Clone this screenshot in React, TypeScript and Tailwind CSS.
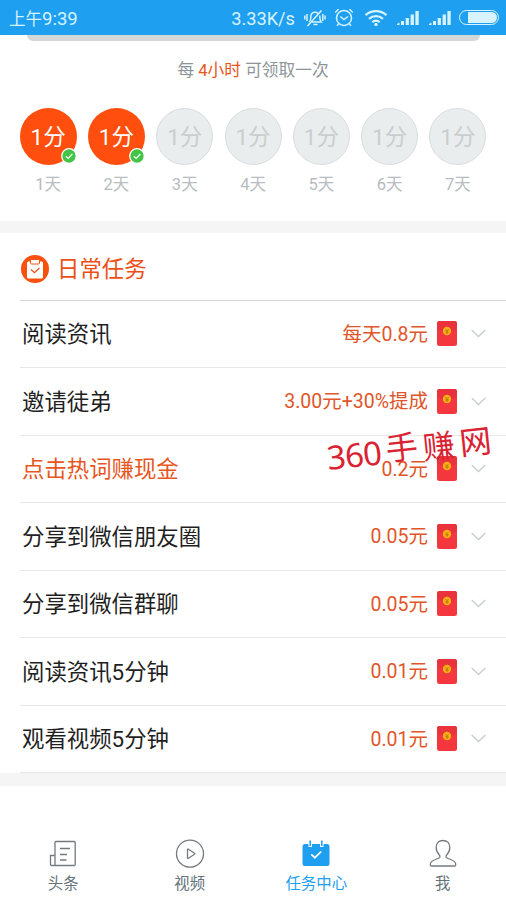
import { clsx } from 'clsx';

const days = [1, 2, 3, 4, 5, 6, 7];
const checkedDays = 2;

const tasks = [
  { title: '阅读资讯', reward: '每天0.8元' },
  { title: '邀请徒弟', reward: '3.00元+30%提成' },
  { title: '点击热词赚现金', reward: '0.2元', highlight: true },
  { title: '分享到微信朋友圈', reward: '0.05元' },
  { title: '分享到微信群聊', reward: '0.05元' },
  { title: '阅读资讯5分钟', reward: '0.01元' },
  { title: '观看视频5分钟', reward: '0.01元' },
];

const SignalIcon = () => (
  <svg width="22" height="16" viewBox="0 0 22 16" fill="currentColor">
    <path d="M0 15v-1l2.500-1.500V15Z" />
    <rect x="4" y="11" width="3" height="4" />
    <rect x="8.700" y="8" width="3.200" height="7" />
    <rect x="13.600" y="4.500" width="3.300" height="10.500" />
    <rect x="18.400" y="1" width="3.300" height="14" />
  </svg>
);

const StatusBar = () => (
  <header className="flex h-[35px] items-center bg-[#1e9ff0] pt-[2px] pl-[9px] leading-none text-[#d6f3ff]">
    <span className="pt-[2px] text-[16.5px]">
      上午<span className="text-[18.5px]">9:39</span>
    </span>
    <span className="ml-auto pt-[2px] text-[18.2px]">3.33K/s</span>
    <div className="flex w-[211px] shrink-0 items-center pb-[2px] pl-[9px]">
      {/* muted bell */}
      <svg width="22" height="18" viewBox="0 0 22 18" fill="none" stroke="currentColor" strokeWidth="1.5">
        <path d="M.8 6.500v4M3 5v7M21 6.500v4M18.800 5v7" />
        <path d="M5.500 13c1.300-1.300 1.300-2.300 1.300-5 0-3 1.600-4.800 4.200-4.800 1.200 0 2.200.4 3 1.200M15.800 6.500c0 4 .1 5 1.400 6.500H8M9.500 15.500h4" />
        <path d="M17.500 1.500 3.500 17" />
      </svg>
      {/* alarm clock */}
      <svg className="ml-[8px]" width="20" height="19" viewBox="0 0 20 19" fill="none" stroke="currentColor" strokeWidth="1.5">
        <circle cx="10" cy="10" r="7.500" />
        <path d="m6.200 8.500 3.800 3 4-3" />
        <path d="M1.200 4.500 4.500 1.300M18.800 4.500l-3.300-3.200M4.500 16l-1.500 1.700M15.500 16l1.500 1.700" />
      </svg>
      <svg className="ml-[10px]" width="24" height="18" viewBox="0 0 24 18" fill="none" stroke="currentColor" strokeWidth="2.3">
        <path d="M1.500 6.200c6-5.400 15-5.400 21 0" />
        <path d="M5 9.800c4.100-3.500 9.900-3.500 14 0" />
        <path d="M8.300 13.200c2.200-1.800 5.200-1.800 7.400 0" />
        <circle cx="12" cy="15.500" r="1.700" fill="currentColor" stroke="none" />
      </svg>
      <span className="ml-[9px]"><SignalIcon /></span>
      <span className="ml-[10px]"><SignalIcon /></span>
      <span className="ml-[8px] flex h-[15px] w-[40px] items-center justify-end rounded-full border-[1.5px] border-[#d6f3ff] pr-[1px]">
        <span className="h-[11px] w-[29px] rounded-l-xs rounded-r-full bg-[#d6f3ff]" />
      </span>
    </div>
  </header>
);

const DayBadge = ({ day }: { day: number }) => {
  const done = day <= checkedDays;

  return (
    <div className="flex w-[68.3px] flex-col items-center">
      <div
        className={clsx(
          'relative flex size-[57px] items-center justify-center rounded-full pt-[2px] text-[22.5px] leading-none',
          done ? 'bg-[#ff4e0e] text-white' : 'border border-[#d9dddd] bg-[#e9eded] text-[#c9cdcf]'
        )}
      >
        1分
        {done && (
          <svg className="absolute right-0 bottom-px" width="16" height="16" viewBox="0 0 16 16" fill="none">
            <circle cx="8" cy="8" r="7.300" fill="#43c447" stroke="white" strokeWidth="1.3" />
            <path d="m4.800 8.200 2.400 2.300 4.200-4.500" stroke="white" strokeWidth="1.2" />
          </svg>
        )}
      </div>
      <span className="mt-[12px] text-[16.5px] leading-4 text-[#b6bcc0]">{day}天</span>
    </div>
  );
};

const RedPacket = () => (
  <svg width="20" height="25" viewBox="0 0 20 25">
    <rect width="20" height="25" rx="2.500" fill="#f4373f" />
    <path d="M0 2.500A2.500 2.500 0 0 1 2.500 0h15A2.500 2.500 0 0 1 20 2.500V7C14 12 6 12 0 7Z" fill="#e9323b" />
    <circle cx="10" cy="10" r="4.200" fill="#fbb116" />
    <path d="m8.300 7.800 1.700 2 1.700-2M10 9.800v3M8.300 10.300h3.400M8.500 11.700h3" stroke="#b86b10" strokeWidth=".7" fill="none" />
  </svg>
);

const TaskRow = ({ title, reward, highlight }: { title: string; reward: string; highlight?: boolean }) => (
  <li className="flex h-[67.5px] items-center border-b border-[#e6e8e8] pr-[20px] pl-[2px]">
    <span className={clsx('pt-px text-[22.4px] leading-none', highlight ? 'text-[#e8561e]' : 'text-[#1f1f1f]')}>{title}</span>
    <span className="mr-[9px] ml-auto pt-px text-[19.5px] leading-none text-[#e0562a]">{reward}</span>
    <RedPacket />
    <svg className="ml-[14px]" width="15" height="9" viewBox="0 0 15 9" fill="none" stroke="#c9cccf" strokeWidth="1.3">
      <path d="m.7 1 6.800 6.500L14.300 1" />
    </svg>
  </li>
);

const TabBar = () => (
  <nav className="grid h-[114px] grid-cols-4 pt-[53px] text-[15.4px] leading-none text-[#66727a]">
    <a className="flex flex-col items-center gap-[8px]">
      <svg width="28" height="30" viewBox="0 0 28 30" fill="none" stroke="#737b80" strokeWidth="1.3">
        <path d="M6 26.500V3.500q0-1 1-1h18.200q1 0 1 1v22q0 1-1 1H2.500q-1 0-1-1V16.500H6" />
        <path d="M11 9.500h10M11 15.500h7M11 21h6.500" />
      </svg>
      头条
    </a>
    <a className="flex flex-col items-center gap-[8px]">
      <svg width="30" height="30" viewBox="0 0 30 30" fill="none" stroke="#737b80" strokeWidth="1.3">
        <circle cx="15" cy="14.700" r="13.500" />
        <path d="M12.500 10.700v8q0 1 1 .5l6-4q.8-.5 0-1l-6-4q-1-.5-1 .5Z" />
      </svg>
      视频
    </a>
    <a className="flex flex-col items-center gap-[8px] text-[#1e9ff0]">
      <svg width="28" height="30" viewBox="0 0 28 30" fill="none">
        <rect x=".5" y="5" width="27" height="22" rx="2.500" fill="#1e9ff0" />
        <path d="M8.200 2v6M19.800 2v6" stroke="white" strokeWidth="3.500" />
        <path d="M8.200 1.500V7M19.800 1.500V7" stroke="#1e9ff0" strokeWidth="1.500" />
        <path d="m9.300 15.300 3.600 3.400 6.300-6.200" stroke="white" strokeWidth="1.700" />
      </svg>
      任务中心
    </a>
    <a className="flex flex-col items-center gap-[8px]">
      <svg width="28" height="30" viewBox="0 0 28 30" fill="none" stroke="#737b80" strokeWidth="1.3">
        <path d="M14 1.500c-4.500 0-6.800 3-6.800 7 0 3.200 1.400 5.800 3.300 7.700.8 1 .6 2.200-.5 2.800-2.500 1.300-8 2.200-8.600 5.500-.2 1.500-.1 2.500.9 2.500h23.400c1 0 1.100-1 .9-2.500-.6-3.300-6.100-4.200-8.600-5.500-1.100-.6-1.300-1.800-.5-2.800 1.900-1.900 3.300-4.500 3.300-7.700 0-4-2.300-7-6.800-7Z" />
      </svg>
      我
    </a>
  </nav>
);

export default function App() {
  return (
    <div className="relative h-[900px] w-[506px] overflow-hidden bg-white font-[Roboto,'Noto_Sans_CJK_SC',sans-serif]">
      <StatusBar />

      <section className="h-[186px]">
        <div className="mr-[26px] ml-[27px] h-[6px] rounded-b-[6px] bg-[#d3d7d7]" />
        <p className="mt-[21px] text-center text-[16.7px] leading-[18px] text-[#8d9599]">
          每 <span className="text-[#e8561e]">4小时</span> 可领取一次
        </p>
        <div className="mt-[28px] ml-[14px] flex">
          {days.map((day) => (
            <DayBadge key={day} day={day} />
          ))}
        </div>
      </section>

      <div className="h-[12px] bg-[#f5f5f5]" />

      <section className="pl-[20px]">
        <h2 className="flex h-[67.5px] items-center gap-[8px] border-b border-[#d3d5d5] pt-[5px] pl-px text-[22.4px] leading-none text-[#ee4f17]">
          <svg width="28" height="28" viewBox="0 0 28 28" fill="none">
            <circle cx="14" cy="14" r="14" fill="#f9500f" />
            <rect x="6" y="6.500" width="16" height="17" rx="1.500" fill="white" />
            <rect x="9.500" y="4.500" width="9" height="4.500" rx="1" fill="white" stroke="#f9500f" />
            <path d="m10 14.500 3.500 3.200 5-4.700" stroke="#f9500f" strokeWidth="1.3" />
          </svg>
          日常任务
        </h2>
        <ul>
          {tasks.map((task) => (
            <TaskRow key={task.title} {...task} />
          ))}
        </ul>
      </section>

      <div className="h-[13px] bg-[#f5f5f5]" />
      <TabBar />

      {/* Watermark over the task list */}
      <div className="absolute top-[436px] left-[327px] flex origin-left -rotate-6 items-center leading-[40px] whitespace-nowrap text-[#d92232]">
        <span className="mr-[5px] font-['Noto_Sans',sans-serif] text-[33px] tracking-[-0.8px]">360</span>
        <span className="flex gap-[5px] text-[32px]">
          <span>手</span>
          <span className="pt-[3px]">赚</span>
          <span className="pt-[2px]">网</span>
        </span>
      </div>
    </div>
  );
}
